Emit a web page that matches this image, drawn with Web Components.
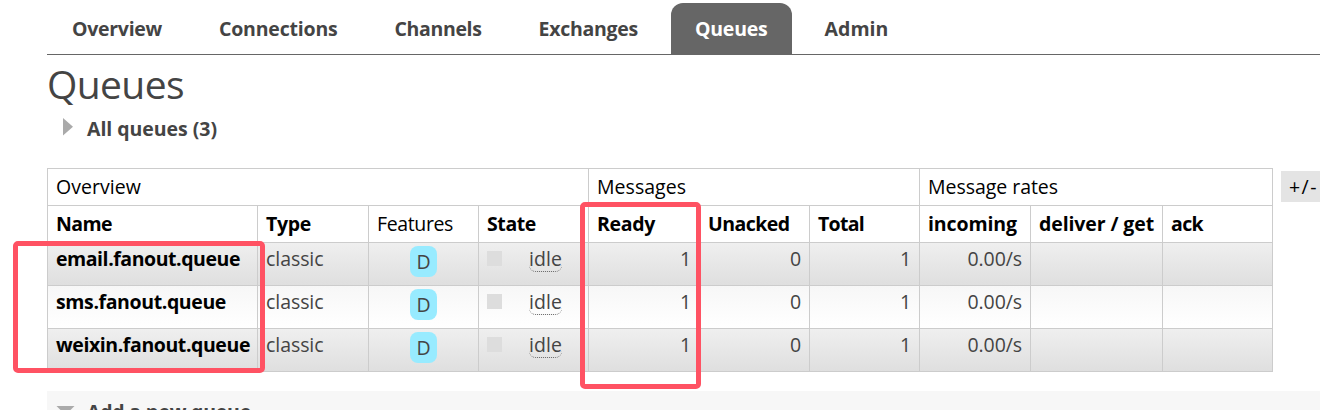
<!DOCTYPE html>
<html lang="en">
<head>
<meta charset="utf-8">
<title>Queues</title>
<style>
html, body { margin: 0; height: 410px; overflow: hidden; background: #fff; }
body { font-family: "Open Sans", "Noto Sans", sans-serif; font-size: 19.5px; color: #444; }
</style>
</head>
<body>
<queues-page></queues-page>
<script>
class FitText extends HTMLElement {
  connectedCallback() {
    const root = this.attachShadow({ mode: "open" });
    root.innerHTML = `<style>:host{display:inline-block;white-space:pre}</style><slot></slot>`;
    const target = parseFloat(this.getAttribute("w"));
    const natural = this.getBoundingClientRect().width;
    if (target && natural) this.style.letterSpacing = (target - natural) / this.textContent.length + "px";
  }
}

class NavTab extends HTMLElement {
  connectedCallback() {
    this.attachShadow({ mode: "open" }).innerHTML = `<style>
      :host{display:block;box-sizing:border-box;height:51px;line-height:51px;padding:0 24px;font-weight:700;border-radius:12px 12px 0 0}
      :host([active]){background:#666;color:#fff}
    </style><slot></slot>`;
  }
}

class NavTabs extends HTMLElement {
  connectedCallback() {
    this.attachShadow({ mode: "open" }).innerHTML = `<style>
      :host{display:flex;gap:9px;padding:3px 0 0 1px;height:51px;border-bottom:1px solid #666}
    </style><slot></slot>`;
  }
}

class SectionToggle extends HTMLElement {
  connectedCallback() {
    const open = this.hasAttribute("open");
    this.attachShadow({ mode: "open" }).innerHTML = `<style>
      :host{display:flex;height:40px;line-height:40px;font-weight:700}
      .mark{width:40px;flex:none}
      svg{display:block}
      path{fill:#aaa}
    </style><div class="mark">${open
      ? `<svg width="39" height="40"><path d="M9.5 15h18l-9 9z"/></svg>`
      : `<svg width="39" height="40"><path d="M16 9v17.5l10-8.7z"/></svg>`}</div><slot></slot>`;
  }
}

class FeatureBadge extends HTMLElement {
  connectedCallback() {
    this.attachShadow({ mode: "open" }).innerHTML = `<style>
      :host{display:block;width:27px;height:31px;line-height:32px;margin-top:3px;border-radius:8px;background:#98ebff;text-align:center}
    </style><slot></slot>`;
  }
}

class QueueState extends HTMLElement {
  connectedCallback() {
    this.attachShadow({ mode: "open" }).innerHTML = `<style>
      :host{display:flex;align-items:flex-start}
      i{width:15px;height:15px;margin:8px 27px 0 0;background:#ddd}
      span{height:24px;line-height:21px;margin-top:5px;box-sizing:border-box;border-bottom:1px dotted #666;border-radius:0 0 7px 7px}
    </style><i></i><span><slot></slot></span>`;
  }
}

class DataCell extends HTMLElement {
  connectedCallback() {
    this.attachShadow({ mode: "open" }).innerHTML = `<style>
      :host{display:flex;box-sizing:border-box;padding:0 8px;border-right:1px solid #ccc;border-bottom:1px solid #ccc;min-width:0;line-height:32px}
      :host([head]){color:#000;line-height:35px}
      :host([bold]){font-weight:700;color:#000}
      :host([num]){justify-content:flex-end}
      :host([center]){justify-content:center}
      :host([shade=dark]){background:linear-gradient(#efefef,#dfdfdf)}
      :host([shade=light]){background:linear-gradient(#f7f7f7,#fff)}
    </style><slot></slot>`;
  }
}

class QueueTable extends HTMLElement {
  connectedCallback() {
    const heads = [["Name",56,1],["Type",45,1],["Features",76,0],["State",49,1],["Ready",58,1],["Unacked",81.5,1],["Total",46,1],["incoming",89,1],["deliver / get",115,1],["ack",32,1]];
    const rows = [["email.fanout.queue",184],["sms.fanout.queue",170],["weixin.fanout.queue",194]];
    const head = heads.map(([t, w, b]) => `<data-cell head ${b ? "bold" : ""}><fit-text w="${w}">${t}</fit-text></data-cell>`).join("");
    const body = rows.map(([name, w], i) => {
      const s = `shade="${i % 2 ? "light" : "dark"}"`;
      const num = (t, n) => `<data-cell num ${s}><fit-text w="${n}">${t}</fit-text></data-cell>`;
      return `<data-cell bold ${s}><fit-text w="${w}">${name}</fit-text></data-cell>
        <data-cell ${s}><fit-text w="57.5">classic</fit-text></data-cell>
        <data-cell center ${s}><feature-badge>D</feature-badge></data-cell>
        <data-cell ${s}><queue-state><fit-text w="33">idle</fit-text></queue-state></data-cell>
        ${num("1", 11)}${num("0", 11)}${num("1", 11)}${num("0.00/s", 54.5)}<data-cell ${s}></data-cell><data-cell ${s}></data-cell>`;
    }).join("");
    this.attachShadow({ mode: "open" }).innerHTML = `<style>
      :host{display:grid;width:1225px;grid-template-columns:210px 111px 110px 110px 111px 110px 110px 111px 132px 110px;
        grid-template-rows:37px 37px 43px 43px 43px;border-left:1px solid #ccc;border-top:1px solid #ccc}
      .g4{grid-column:span 4}.g3{grid-column:span 3}
    </style>
    <data-cell head class="g4"><fit-text w="85">Overview</fit-text></data-cell>
    <data-cell head class="g3"><fit-text w="89">Messages</fit-text></data-cell>
    <data-cell head class="g3"><fit-text w="130">Message rates</fit-text></data-cell>
    ${head}${body}`;
  }
}

class MarkFrame extends HTMLElement {
  connectedCallback() {
    this.attachShadow({ mode: "open" }).innerHTML = `<style>
      :host{display:block;position:absolute;box-sizing:border-box;border:5px solid #ff5263;border-radius:5px}
    </style>`;
  }
}

class QueuesPage extends HTMLElement {
  connectedCallback() {
    this.attachShadow({ mode: "open" }).innerHTML = `<style>
      :host{display:block;position:relative;width:1320px;height:410px;overflow:hidden}
      main{padding-left:47px}
      h1{margin:0;height:54px;line-height:58px;font-size:39px;font-weight:400}
      .list{display:flex;align-items:flex-start;gap:8px;margin-top:19px}
      .more{flex:none;box-sizing:border-box;width:45px;height:31px;margin-top:3px;padding-left:8px;line-height:32px;background:#e4e4e4;color:#000}
      .add{margin-top:19px;height:40px;line-height:41px;background:#f7f7f7}
      .names{left:13px;top:241px;width:252px;height:132px}
      .ready{left:580px;top:202px;width:121px;height:187px}
    </style>
    <main>
      <nav-tabs>
        <nav-tab><fit-text w="90">Overview</fit-text></nav-tab>
        <nav-tab><fit-text w="118.5">Connections</fit-text></nav-tab>
        <nav-tab><fit-text w="87">Channels</fit-text></nav-tab>
        <nav-tab><fit-text w="99.5">Exchanges</fit-text></nav-tab>
        <nav-tab active><fit-text w="72.5">Queues</fit-text></nav-tab>
        <nav-tab><fit-text w="64">Admin</fit-text></nav-tab>
      </nav-tabs>
      <h1><fit-text w="137">Queues</fit-text></h1>
      <section-toggle><fit-text w="130">All queues (3)</fit-text></section-toggle>
      <div class="list"><queue-table></queue-table><div class="more"><fit-text w="29">+/-</fit-text></div></div>
      <section-toggle open class="add"><fit-text w="164">Add a new queue</fit-text></section-toggle>
    </main>
    <mark-frame class="names"></mark-frame>
    <mark-frame class="ready"></mark-frame>`;
  }
}

customElements.define("nav-tab", NavTab);
customElements.define("nav-tabs", NavTabs);
customElements.define("section-toggle", SectionToggle);
customElements.define("feature-badge", FeatureBadge);
customElements.define("queue-state", QueueState);
customElements.define("data-cell", DataCell);
customElements.define("queue-table", QueueTable);
customElements.define("mark-frame", MarkFrame);
customElements.define("queues-page", QueuesPage);
customElements.define("fit-text", FitText);
</script>
</body>
</html>
